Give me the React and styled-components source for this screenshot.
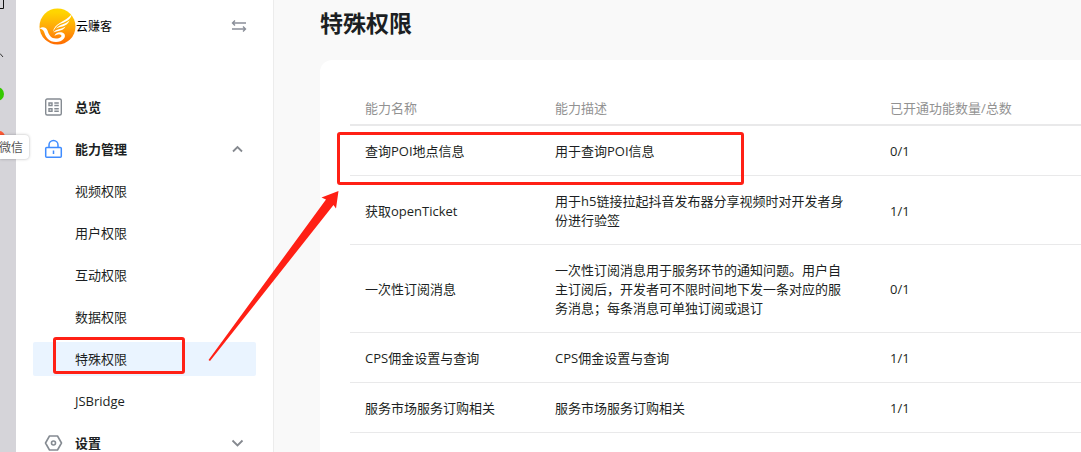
import styled, { createGlobalStyle } from "styled-components";

const GlobalStyle = createGlobalStyle`
  * {
    box-sizing: border-box;
  }

  body {
    margin: 0;
    background-color: #f9f9f9;
    color: #1c1f23;
    font-family: "Open Sans", "Noto Sans CJK SC", sans-serif;
    font-size: 13px;
    line-height: 19px;
    overflow: hidden;
  }
`;

const Page = styled.div`
  position: relative;
  display: flex;
  min-height: 100vh;
`;

const Dock = styled.div`
  flex: 0 0 16px;
  background-color: #d5d4d9;

  svg {
    display: block;
  }
`;

const DockTip = styled.div`
  position: absolute;
  left: 0;
  top: 135px;
  padding: 3px 6px 2px 0;
  height: 24px;
  border-radius: 0 4px 4px 0;
  background-color: #fff;
  box-shadow: 0 0 3px rgba(0, 0, 0, 0.3);
  color: #555;
  font-size: 12px;

  span {
    display: block;
    margin-left: -1px;
  }
`;

const Sidebar = styled.aside`
  flex: 0 0 258px;
  padding: 0 17px;
  border-right: 1px solid #ececec;
  background-color: #fff;
`;

const Brand = styled.div`
  display: flex;
  align-items: center;
  height: 52px;
  margin-bottom: 38px;
  padding: 0 9px 0 6px;
  color: #000;
  font-size: 12px;

  span {
    flex: 1;
  }
`;

const IconButton = styled.button`
  display: flex;
  padding: 0;
  border: 0;
  background: none;
`;

const Menu = styled.nav`
  display: flex;
  flex-direction: column;
  gap: 8px;
`;

const MenuLink = styled.a`
  display: flex;
  align-items: center;
  flex: 0 0 auto;
  height: 34px;
  padding: 0 11px 0 ${(props) => (props.$child ? "42px" : "11px")};
  border-radius: 2px;
  background-color: ${(props) => (props.$active ? "#eaf4ff" : "transparent")};
  color: #1c1f23;
  font-weight: ${(props) => (props.$child ? 400 : 700)};
  text-decoration: none;

  span {
    flex: 1;
  }

  svg:first-child {
    margin-right: 12px;
  }
`;

const Main = styled.main`
  flex: 1;
  min-width: 0;
  padding-left: 46px;
`;

const Title = styled.h1`
  margin: 0;
  padding: 7px 0 21px;
  font-size: 23px;
  font-weight: 700;
  line-height: 32px;
`;

const Card = styled.section`
  min-height: calc(100vh - 60px);
  padding: 30px 0 0 30px;
  border-radius: 12px 0 0 0;
  background-color: #fff;
  overflow: hidden;
`;

const Table = styled.table`
  width: 100%;
  border-collapse: separate;
  border-spacing: 0;
  table-layout: fixed;

  th,
  td {
    padding: 16px 15px 14px;
    border-bottom: 1px solid #e9e9ea;
    text-align: left;
    vertical-align: middle;
  }

  th {
    padding: 9px 15px 6px;
    border-bottom-width: 2px;
    color: #929292;
    font-weight: 400;
  }
`;

const NameCol = styled.col`
  width: 190px;
`;

const DescriptionCol = styled.col`
  width: 335px;
`;

const Description = styled.td`
  && {
    padding-right: 28px;
  }
`;

const Highlight = styled.div`
  position: absolute;
  left: ${(props) => props.$left}px;
  top: ${(props) => props.$top}px;
  width: ${(props) => props.$width}px;
  height: ${(props) => props.$height}px;
  border: 3px solid #ff2015;
  border-radius: 3px;
  pointer-events: none;
`;

const Arrow = styled.svg`
  position: absolute;
  left: 200px;
  top: 184px;
  pointer-events: none;
`;

const permissions = [
  { name: "查询POI地点信息", description: "用于查询POI信息", count: "0/1" },
  {
    name: "获取openTicket",
    description: "用于h5链接拉起抖音发布器分享视频时对开发者身份进行验签",
    count: "1/1",
  },
  {
    name: "一次性订阅消息",
    description:
      "一次性订阅消息用于服务环节的通知问题。用户自主订阅后，开发者可不限时间地下发一条对应的服务消息；每条消息可单独订阅或退订",
    count: "0/1",
  },
  { name: "CPS佣金设置与查询", description: "CPS佣金设置与查询", count: "1/1" },
  {
    name: "服务市场服务订购相关",
    description: "服务市场服务订购相关",
    count: "1/1",
  },
];

const abilityLinks = [
  "视频权限",
  "用户权限",
  "互动权限",
  "数据权限",
  "特殊权限",
  "JSBridge",
];

const Logo = () => (
  <svg width="37" height="37" viewBox="0 0 37 37" aria-hidden="true">
    <defs>
      <linearGradient id="sun" x1="0" y1="0" x2="0" y2="1">
        <stop offset="0.1" stopColor="#ffd500" />
        <stop offset="0.55" stopColor="#ffa50a" />
        <stop offset="1" stopColor="#ff6a00" />
      </linearGradient>
    </defs>
    <circle cx="18.5" cy="18.5" r="18" fill="url(#sun)" />
    <path
      d="M0.5 20.5 C3 18.500 7 18.500 8.500 22.500 C10 27 12 30.500 17 30.500 C21 30.500 23.500 28.500 22 27 C20.500 25.500 17.500 26.500 15.500 28 C16 24.500 22 23 25 25.500 C28 29 23.500 34 17 34 C10 34 6.500 29 5.500 25 C4.500 22 3 21 0.500 20.500Z"
      fill="#fff"
    />
    <path
      d="M14 24 C15 15 26 14 32.500 6.500 C32.500 11.500 26 14 21 16 C18 17.500 16 20 14 24Z M17 20.500 C20 16.500 26 16.500 30.500 12.500 C29 17 24 18.500 21 19 C19 19.500 18 20 17 20.500Z M14.500 24.500 C17 20.500 22 21.500 26.500 18.500 C25 22.500 20 22.500 14.500 24.500Z"
      fill="#fff"
    />
  </svg>
);

const SwapIcon = () => (
  <svg
    width="16"
    height="14"
    viewBox="0 0 16 14"
    fill="none"
    stroke="#8a8f99"
    strokeWidth="1.4"
  >
    <path d="M15 4H1.500M4 1.500L1.500 4L4 6.500M1 10H14.500M12 7.500L14.500 10L12 12.500" />
  </svg>
);

const OverviewIcon = () => (
  <svg
    width="19"
    height="18"
    viewBox="0 0 19 18"
    fill="none"
    stroke="#858b92"
    strokeWidth="1.4"
  >
    <rect x="1.7" y="1" width="15.6" height="16" rx="1.5" />
    <path d="M5 5h3v2.500h-3zM5 10.700h3v2.500h-3zM10.300 5h4.500M10.300 7.500h4.500M10.300 10.700h4.500M10.300 13.200h4.500" />
  </svg>
);

const LockIcon = () => (
  <svg
    width="19"
    height="20"
    viewBox="0 0 19 20"
    fill="none"
    stroke="#3f8cff"
    strokeWidth="1.5"
  >
    <rect x="1.7" y="8.5" width="15.6" height="9.8" rx="1" />
    <path d="M5 8.500V6a4.500 4.500 0 0 1 9 0v2.500M9.500 11.500v3.500" />
  </svg>
);

const SettingsIcon = () => (
  <svg
    width="19"
    height="18"
    viewBox="0 0 19 18"
    fill="none"
    stroke="#858b92"
    strokeWidth="1.6"
    strokeLinejoin="round"
  >
    <path d="M5.500 2h8l4 7-4 7h-8l-4-7z" />
    <circle cx="9.5" cy="9" r="2" />
  </svg>
);

const Chevron = ({ up }) => (
  <svg
    width="16"
    height="10"
    viewBox="0 0 16 10"
    fill="none"
    stroke="#85898f"
    strokeWidth="1.8"
  >
    <path d={up ? "M4 7.500L8.500 3L13 7.500" : "M3.500 2.500L8.500 7.500L13.500 2.500"} />
  </svg>
);

const App = () => {
  return (
    <>
      <GlobalStyle />
      <Page>
        <Dock>
          <svg width="16" height="150" viewBox="0 0 16 150" aria-hidden="true">
            <path d="M0 8.500H3.500V0" fill="none" stroke="#111" />
            <path d="M0 53.500L3 57" fill="none" stroke="#333" />
            <circle cx="-3" cy="94" r="7" fill="#35c900" />
            <circle cx="-1" cy="137" r="6" fill="#ff5a36" />
          </svg>
        </Dock>

        <Sidebar>
          <Brand>
            <Logo />
            <span>云赚客</span>
            <IconButton aria-label="切换">
              <SwapIcon />
            </IconButton>
          </Brand>
          <Menu>
            <MenuLink href="#overview">
              <OverviewIcon />
              <span>总览</span>
            </MenuLink>
            <MenuLink href="#ability">
              <LockIcon />
              <span>能力管理</span>
              <Chevron up />
            </MenuLink>
            {abilityLinks.map((label) => (
              <MenuLink
                key={label}
                href={`#${label}`}
                $child
                $active={label === "特殊权限"}
              >
                <span>{label}</span>
              </MenuLink>
            ))}
            <MenuLink href="#settings">
              <SettingsIcon />
              <span>设置</span>
              <Chevron />
            </MenuLink>
          </Menu>
        </Sidebar>

        <Main>
          <Title>特殊权限</Title>
          <Card>
            <Table>
              <colgroup>
                <NameCol />
                <DescriptionCol />
                <col />
              </colgroup>
              <thead>
                <tr>
                  <th>能力名称</th>
                  <th>能力描述</th>
                  <th>已开通功能数量/总数</th>
                </tr>
              </thead>
              <tbody>
                {permissions.map((item) => (
                  <tr key={item.name}>
                    <td>{item.name}</td>
                    <Description>{item.description}</Description>
                    <td>{item.count}</td>
                  </tr>
                ))}
              </tbody>
            </Table>
          </Card>
        </Main>

        <DockTip>
          <span>微信</span>
        </DockTip>

        {/* Annotations over the page */}
        <Highlight $left={53} $top={337} $width={132} $height={37} />
        <Highlight $left={337} $top={132} $width={407} $height={53} />
        <Arrow width="150" height="186" viewBox="0 0 150 186">
          <path
            d="M138.500 7L121.500 13.500L126 15.500L8.500 176L10 177L133.500 21L136 24.500Z"
            fill="#ff2015"
          />
        </Arrow>
      </Page>
    </>
  );
};

export default App;
